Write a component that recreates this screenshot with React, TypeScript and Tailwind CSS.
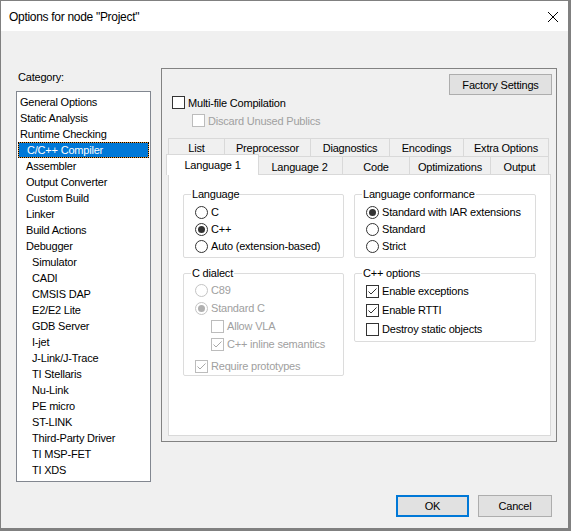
import React from "react";

const FONT = "font-['Liberation_Sans',Arial,sans-serif]";

function Check({ checked = false, disabled = false }: { checked?: boolean; disabled?: boolean }) {
  return (
    <span
      className={`w-[13px] h-[13px] border ${disabled ? "border-[#bcbcbc]" : "border-[#333333]"} bg-white flex items-center justify-center shrink-0`}
    >
      {checked && (
        <svg width="11" height="11" viewBox="0 0 11 11">
          <polyline
            points="1.5,5.5 4,8 9.5,2.5"
            fill="none"
            stroke={disabled ? "#a8a8a8" : "#333333"}
            strokeWidth="1"
          />
        </svg>
      )}
    </span>
  );
}

function Radio({ on = false, disabled = false }: { on?: boolean; disabled?: boolean }) {
  return (
    <span
      className={`w-[13px] h-[13px] rounded-full border ${disabled ? "border-[#c4c4c4]" : "border-[#333333]"} bg-white flex items-center justify-center shrink-0`}
    >
      {on && <span className={`w-[7px] h-[7px] rounded-full ${disabled ? "bg-[#b0b0b0]" : "bg-[#333333]"}`} />}
    </span>
  );
}

const items: [string, number][] = [
  ["General Options", 0],
  ["Static Analysis", 0],
  ["Runtime Checking", 0],
  ["C/C++ Compiler", 1],
  ["Assembler", 1],
  ["Output Converter", 1],
  ["Custom Build", 1],
  ["Linker", 1],
  ["Build Actions", 1],
  ["Debugger", 1],
  ["Simulator", 2],
  ["CADI", 2],
  ["CMSIS DAP", 2],
  ["E2/E2 Lite", 2],
  ["GDB Server", 2],
  ["I-jet", 2],
  ["J-Link/J-Trace", 2],
  ["TI Stellaris", 2],
  ["Nu-Link", 2],
  ["PE micro", 2],
  ["ST-LINK", 2],
  ["Third-Party Driver", 2],
  ["TI MSP-FET", 2],
  ["TI XDS", 2],
];

const levelPad = ["pl-[3px]", "pl-[9px]", "pl-[15px]"];
const levelPadSel = ["pl-[2px]", "pl-[8px]", "pl-[14px]"];

const row1: [string, string][] = [
  ["List", "w-[56px]"],
  ["Preprocessor", "w-[86px]"],
  ["Diagnostics", "w-[79px]"],
  ["Encodings", "w-[74px]"],
  ["Extra Options", "w-[86px]"],
];

const row2: [string, string][] = [
  ["Language 2", "w-[85px]"],
  ["Code", "w-[67px]"],
  ["Optimizations", "w-[81px]"],
  ["Output", "w-[59px]"],
];

export default function App() {
  return (
    <div
      className={`${FONT} text-[11px] tracking-[-0.2px] text-black w-[571px] h-[531px] flex flex-col border-l border-t border-r-[3px] border-b-[3px] border-[#808080] bg-[#f0f0f0] overflow-hidden`}
    >
      {/* Title bar */}
      <div className="h-[30px] bg-white flex items-center justify-between pl-[8px] pr-[10px] shrink-0">
        <span className="text-[12px] tracking-[-0.3px] leading-[16px] mt-[1px]">Options for node "Project"</span>
        <svg width="10" height="10" viewBox="0 0 10 10" className="mt-[1px]">
          <line x1="0" y1="0" x2="10" y2="10" stroke="#000" strokeWidth="1" />
          <line x1="10" y1="0" x2="0" y2="10" stroke="#000" strokeWidth="1" />
        </svg>
      </div>

      {/* Body */}
      <div className="flex-1 flex flex-col">
        <div className="flex pl-[15px] h-[451px]">
          {/* Category */}
          <div className="w-[135px] flex flex-col pt-[39px]">
            <div className="h-[14px] leading-[14px] pl-[2px] mb-[7px]">Category:</div>
            <div className="h-[391px] border border-[#828790] bg-white pt-[2px]">
              {items.map(([t, lvl], i) =>
                i === 3 ? (
                  <div key={t} className="h-[16px] px-[1px]">
                    <div className="h-full border border-dotted border-black bg-[#e89a3c]">
                      <div className={`h-full bg-[#0078d7] text-white flex items-center ${levelPadSel[lvl]} leading-[14px]`}>
                        {t}
                      </div>
                    </div>
                  </div>
                ) : (
                  <div key={t} className={`h-[16px] flex items-center leading-[14px] ${levelPad[lvl]} whitespace-nowrap`}>
                    {t}
                  </div>
                )
              )}
            </div>
          </div>

          {/* Options panel */}
          <div className="ml-[10px] mt-[37px] w-[396px] h-[374px] border border-[#828282] flex flex-col">
            <div className="flex justify-end pr-[4px] pt-[5px]">
              <button className="w-[103px] h-[21px] bg-[#e1e1e1] border border-[#adadad] flex items-center justify-center leading-[14px]">
                Factory Settings
              </button>
            </div>
            <div className="flex items-center h-[15px] pl-[10px] gap-[3px] leading-[14px]">
              <Check />
              <span>Multi-file Compilation</span>
            </div>
            <div className="flex items-center h-[15px] pl-[30px] gap-[3px] mt-[3px] leading-[14px] text-[#a0a0a0]">
              <Check disabled />
              <span>Discard Unused Publics</span>
            </div>

            {/* Tabs */}
            <div className="ml-[6px] mt-[10px] w-[383px] flex flex-col">
              <div className="flex h-[18px]">
                {row1.map(([t, w], i) => (
                  <div
                    key={t}
                    className={`${w} h-full border-t border-l ${i === row1.length - 1 ? "border-r" : ""} border-[#d9d9d9] bg-[#f0f0f0] flex justify-center pt-[2px] leading-[14px] whitespace-nowrap`}
                  >
                    {t}
                  </div>
                ))}
              </div>
              <div className="flex h-[18px]">
                <div className="relative z-10 w-[93px] -ml-[2px] -mr-[2px] -mt-[2px] h-[21px] border-t border-l border-r border-[#d9d9d9] bg-white flex justify-center pt-[3px] leading-[14px] whitespace-nowrap">
                  Language 1
                </div>
                {row2.map(([t, w], i) => (
                  <div
                    key={t}
                    className={`${w} h-full border-t ${i === 0 ? "" : "border-l"} ${i === row2.length - 1 ? "border-r" : ""} border-[#d9d9d9] bg-[#f0f0f0] flex justify-center pt-[3px] leading-[14px] whitespace-nowrap`}
                  >
                    {t}
                  </div>
                ))}
              </div>

              {/* Tab page */}
              <div className="h-[262px] border border-[#d9d9d9] bg-white flex gap-[10px] pl-[14px] pt-[12px]">
                {/* Left column */}
                <div className="w-[161px] flex flex-col">
                  <fieldset className="border border-[#dcdcdc] rounded-[2px]">
                    <legend className="ml-[7px] px-[1px] leading-[14px]">Language</legend>
                    <div className="pl-[11px] pt-[3px] pb-[2px]">
                      <div className="flex items-center h-[17px] gap-[3px]">
                        <Radio />
                        <span>C</span>
                      </div>
                      <div className="flex items-center h-[17px] gap-[3px]">
                        <Radio on />
                        <span>C++</span>
                      </div>
                      <div className="flex items-center h-[17px] gap-[3px]">
                        <Radio />
                        <span>Auto (extension-based)</span>
                      </div>
                    </div>
                  </fieldset>

                  <fieldset className="mt-[8px] border border-[#dcdcdc] rounded-[2px]">
                    <legend className="ml-[7px] px-[1px] leading-[14px]">C dialect</legend>
                    <div className="pl-[11px] pt-[1px] text-[#a0a0a0]">
                      <div className="flex items-center h-[18px] gap-[3px]">
                        <Radio disabled />
                        <span>C89</span>
                      </div>
                      <div className="flex items-center h-[18px] gap-[3px]">
                        <Radio on disabled />
                        <span>Standard C</span>
                      </div>
                      <div className="flex items-center h-[18px] gap-[3px] pl-[16px]">
                        <Check disabled />
                        <span>Allow VLA</span>
                      </div>
                      <div className="flex items-center h-[18px] gap-[3px] pl-[16px]">
                        <Check checked disabled />
                        <span>C++ inline semantics</span>
                      </div>
                      <div className="flex items-center h-[18px] gap-[3px] mt-[4px]">
                        <Check checked disabled />
                        <span>Require prototypes</span>
                      </div>
                    </div>
                  </fieldset>
                </div>

                {/* Right column */}
                <div className="w-[182px] flex flex-col">
                  <fieldset className="border border-[#dcdcdc] rounded-[2px]">
                    <legend className="ml-[7px] px-[1px] leading-[14px]">Language conformance</legend>
                    <div className="pl-[11px] pt-[3px] pb-[2px]">
                      <div className="flex items-center h-[17px] gap-[3px]">
                        <Radio on />
                        <span>Standard with IAR extensions</span>
                      </div>
                      <div className="flex items-center h-[17px] gap-[3px]">
                        <Radio />
                        <span>Standard</span>
                      </div>
                      <div className="flex items-center h-[17px] gap-[3px]">
                        <Radio />
                        <span>Strict</span>
                      </div>
                    </div>
                  </fieldset>

                  <fieldset className="mt-[8px] border border-[#dcdcdc] rounded-[2px]">
                    <legend className="ml-[7px] px-[1px] leading-[14px]">C++ options</legend>
                    <div className="pl-[11px] pt-[2px] pb-[2px]">
                      <div className="flex items-center h-[19px] gap-[3px]">
                        <Check checked />
                        <span>Enable exceptions</span>
                      </div>
                      <div className="flex items-center h-[19px] gap-[3px]">
                        <Check checked />
                        <span>Enable RTTI</span>
                      </div>
                      <div className="flex items-center h-[19px] gap-[3px]">
                        <Check />
                        <span>Destroy static objects</span>
                      </div>
                    </div>
                  </fieldset>
                </div>
              </div>
            </div>
          </div>
        </div>

        {/* Buttons */}
        <div className="flex justify-end gap-[9px] pr-[16px] mt-[13px]">
          <button className="w-[73px] h-[22px] bg-[#e1e1e1] border-2 border-[#0078d7] flex items-center justify-center leading-[14px]">
            OK
          </button>
          <button className="w-[74px] h-[22px] bg-[#e1e1e1] border border-[#adadad] flex items-center justify-center leading-[14px]">
            Cancel
          </button>
        </div>
      </div>
    </div>
  );
}
